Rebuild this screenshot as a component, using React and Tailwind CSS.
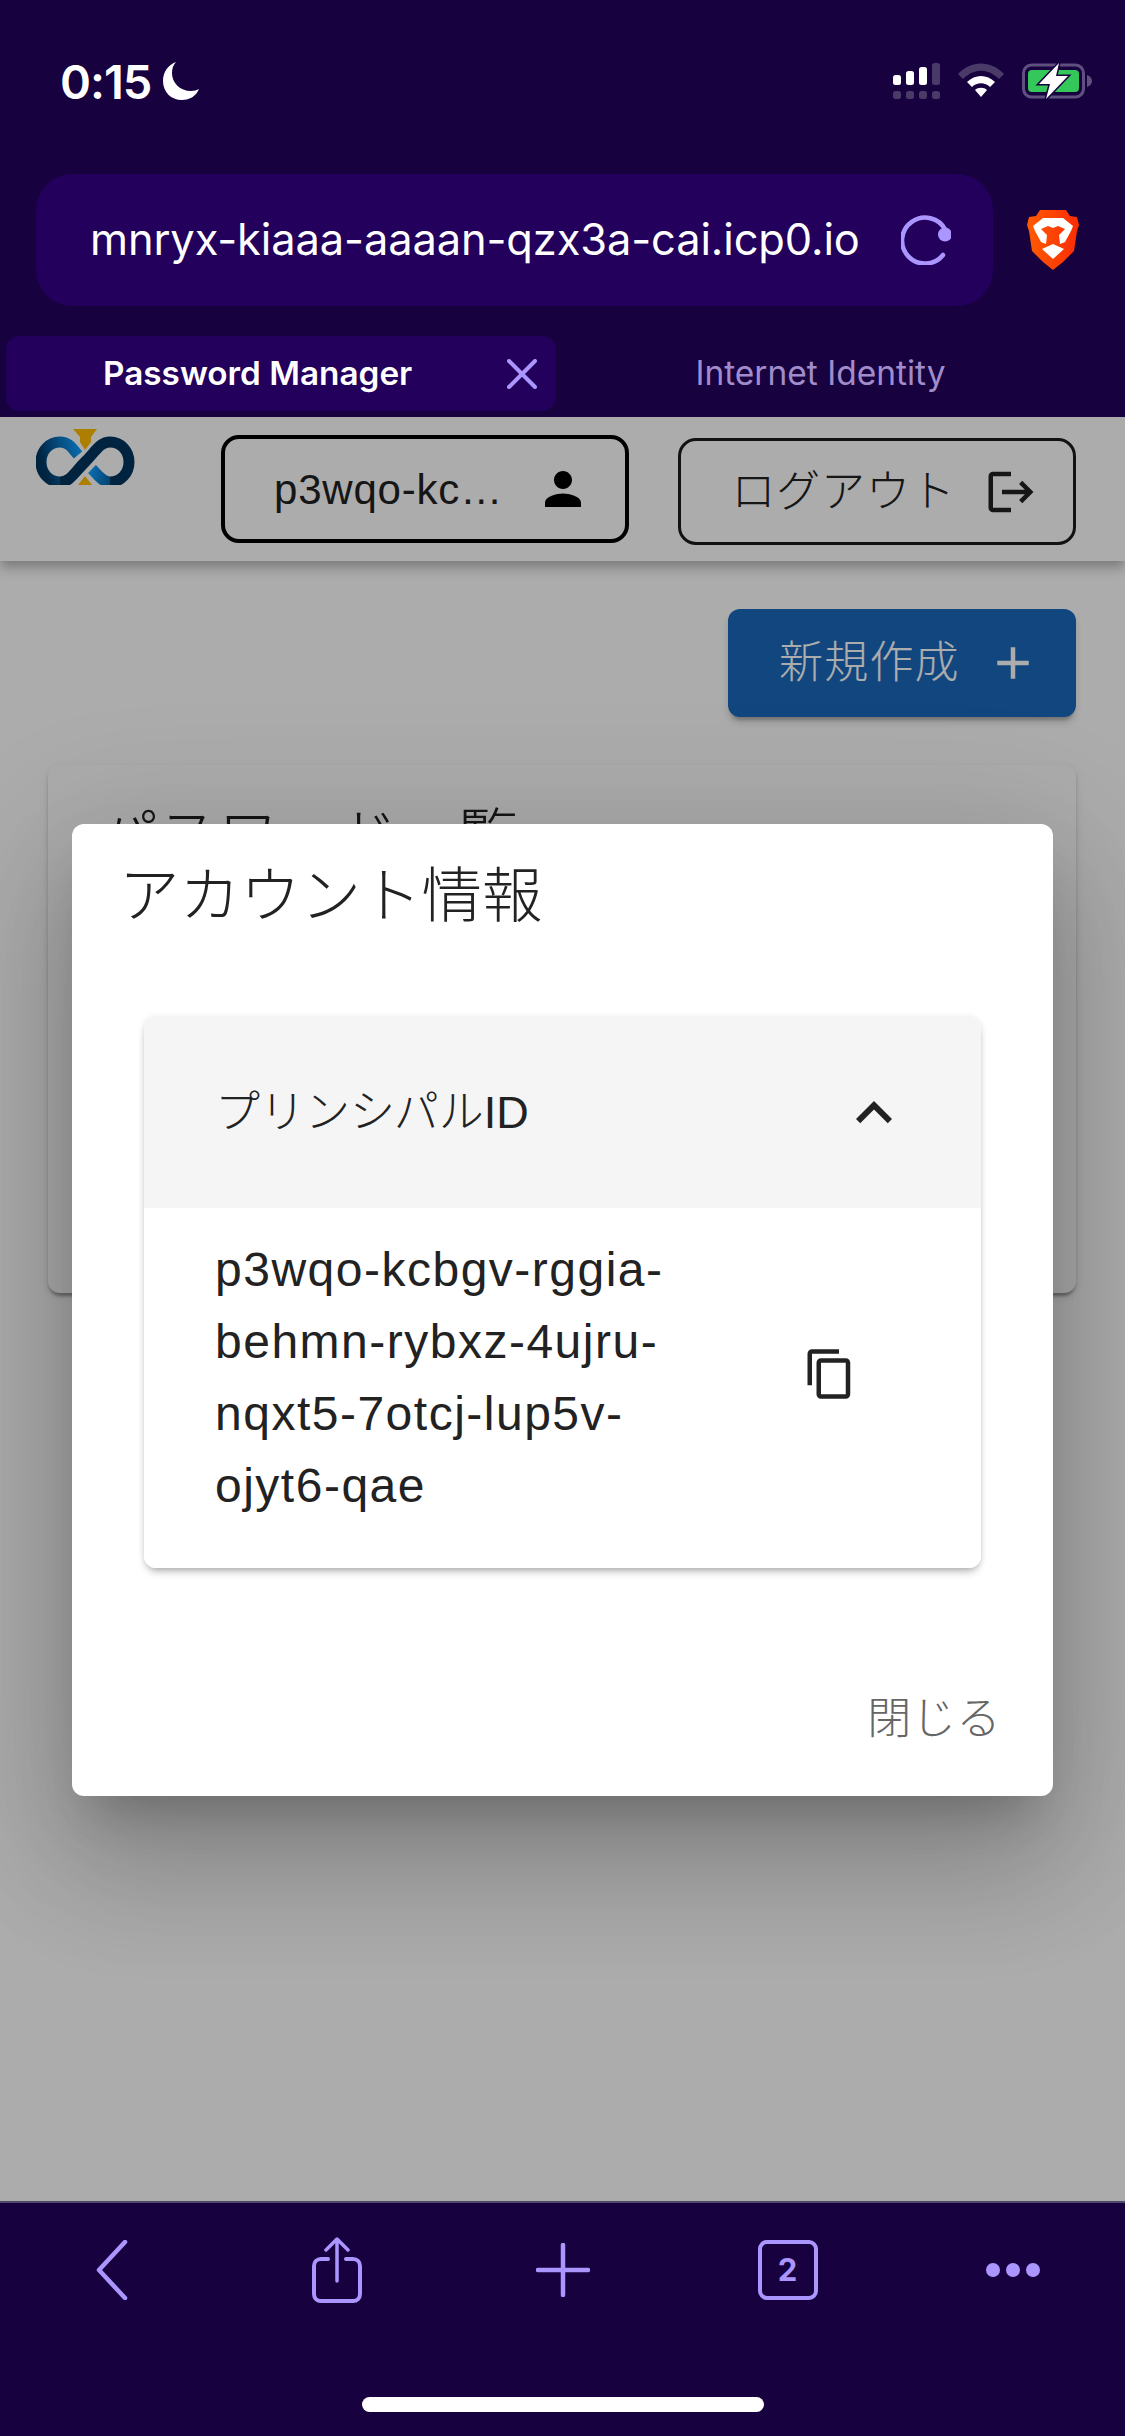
import React from "react";

const Mui = ({ d, className }) => (
  <svg viewBox="0 0 24 24" className={className} fill="currentColor">
    <path d={d} />
  </svg>
);

const StatusBar = () => (
  <div className="h-[174px] flex justify-between pl-[60px] pr-[33px] pt-[54px]">
    <div className="flex items-start text-white">
      <span className="text-[47px] leading-[56px] font-semibold tracking-[-1px]">0:15</span>
      <svg viewBox="0 0 36 38" className="w-[36px] h-[38px] ml-[12px] mt-[8px]" fill="currentColor">
        <path d="M13 0C5 3 0 10 0 19c0 11 8 19 19 19 8 0 14-4 17-11-2 1-5 2-8 2C17 29 9 21 9 11c0-4 1-8 4-11z" />
      </svg>
    </div>
    <div className="flex items-start pt-[9px] gap-[18px]">
      <svg viewBox="0 0 47 36" className="w-[47px] h-[36px]">
        <rect x="0" y="12" width="8" height="10" rx="2.5" fill="#fff" />
        <rect x="13" y="8" width="8" height="14" rx="2.5" fill="#fff" />
        <rect x="26" y="4" width="8" height="18" rx="2.5" fill="#fff" />
        <rect x="39" y="0" width="8" height="22" rx="2.5" fill="#4a3a68" />
        {[0, 13, 26, 39].map((x) => (
          <rect key={x} x={x} y="28" width="8" height="8" rx="2.5" fill="#4a3a68" />
        ))}
      </svg>
      <svg viewBox="0 0 46 34" className="w-[46px] h-[34px]">
        <path d="M0 11C13-3 33-3 46 11l-5 5C30 5 16 5 5 16z" fill="#4a3a68" />
        <path d="M9 19c8-8 20-8 28 0l-5 5c-5-5-13-5-18 0z" fill="#fff" />
        <path d="M17 27c3-3 9-3 12 0l-6 7z" fill="#fff" />
      </svg>
      <svg viewBox="0 0 70 36" className="w-[70px] h-[36px]">
        <rect x="1.5" y="2" width="60" height="32" rx="8" fill="none" stroke="#5f5080" strokeWidth="3" />
        <path d="M65 12c3 1 5 3 5 6s-2 5-5 6z" fill="#5f5080" />
        <rect x="6" y="7" width="51" height="22" rx="4" fill="#34c759" />
        <path d="M37 0L17 21h11l-4 15 22-23H34z" fill="#fff" stroke="#17013f" strokeWidth="3" paintOrder="stroke" />
      </svg>
    </div>
  </div>
);

const BraveLion = () => (
  <svg viewBox="0 0 52 60" className="w-[52px] h-[60px]">
    <defs>
      <linearGradient id="brave" x1="0" x2="1" y1="0" y2="0">
        <stop offset="0" stopColor="#ff5a00" />
        <stop offset="1" stopColor="#fb2c05" />
      </linearGradient>
    </defs>
    <path
      d="M13 0H39L43 6 50 7 52 15 50 21 47 41 36 52 26 60 16 52 5 41 2 21 0 15 2 7 9 6Z"
      fill="url(#brave)"
    />
    <path
      d="M6 16L16 8H36L46 16 44 21 38 32 33 34 32 25 38 19 31 16 26 18 21 16 14 19 20 25 19 34 14 32 8 21Z"
      fill="#fff"
    />
    <path d="M15 39L26 34 37 39 26 49Z" fill="#fff" />
  </svg>
);

const TopChrome = () => (
  <div className="h-[417px] bg-[#17013f] flex flex-col shrink-0">
    <StatusBar />
    <div className="h-[132px] flex items-center pl-[36px]">
      <div className="w-[957px] h-full bg-[#22005c] rounded-[36px] flex items-center pl-[54px] pr-[42px] justify-between">
        <span className="text-white text-[43.4px] tracking-[-0.1px]">mnryx-kiaaa-aaaan-qzx3a-cai.icp0.io</span>
        <svg viewBox="0 0 50 50" className="w-[50px] h-[50px]" fill="none">
          <path
            d="M42 40A23 23 0 1 1 44.5 15"
            stroke="#ab95ff"
            strokeWidth="4.5"
            strokeLinecap="round"
          />
          <circle cx="44" cy="19.5" r="7" fill="#ab95ff" />
        </svg>
      </div>
      <div className="ml-[34px]">
        <BraveLion />
      </div>
    </div>
    <div className="mt-[30px] h-[75px] flex pl-[6px]">
      <div className="w-[550px] h-full bg-[#22005c] rounded-[14px] flex items-center justify-between pl-[97px] pr-[19px]">
        <span className="text-white text-[33.3px] font-semibold">Password Manager</span>
        <svg viewBox="0 0 30 30" className="w-[30px] h-[30px]" fill="none">
          <path d="M2 2L28 28M28 2L2 28" stroke="#ab95ff" strokeWidth="4" strokeLinecap="round" />
        </svg>
      </div>
      <div className="flex-1 flex items-center justify-center pr-[40px]">
        <span className="text-[#a08ccb] text-[33.5px]">Internet Identity</span>
      </div>
    </div>
  </div>
);

const Logo = () => (
  <svg viewBox="0 0 99 56" className="w-[99px] h-[56px]" fill="none">
    <defs>
      <linearGradient id="logoLeft" gradientUnits="userSpaceOnUse" x1="44" y1="24" x2="6" y2="36">
        <stop offset="0" stopColor="#0f9dff" />
        <stop offset="1" stopColor="#003660" />
      </linearGradient>
      <linearGradient id="logoRight" gradientUnits="userSpaceOnUse" x1="56" y1="40" x2="92" y2="50">
        <stop offset="0" stopColor="#0f9dff" />
        <stop offset="1" stopColor="#003660" />
      </linearGradient>
    </defs>
    <path d="M37 0H61L55 8V13L49 21 44 13V8Z" fill="#ffbc00" />
    <path d="M49 47L56 56H42Z" fill="#ffbc00" />
    <path d="M42 26C36 19 33 13 24 13 13 13 5 22 5 33S13 53 24 53" stroke="url(#logoLeft)" strokeWidth="11" />
    <path d="M74 53C66 53 62 46 56 40" stroke="url(#logoRight)" strokeWidth="11" />
    <path d="M24 53C34 53 38 44 49 33S64 13 74 13C85 13 93 22 93 33S85 53 74 53" stroke="#003660" strokeWidth="11" />
  </svg>
);

const Header = () => (
  <div className="h-[144px] bg-white flex items-start pl-[36px] pr-[49px] shadow-[0_6px_12px_rgba(0,0,0,0.3)] relative">
    <div className="mt-[12px]">
      <Logo />
    </div>
    <button className="ml-[86px] mt-[18px] w-[408px] h-[108px] border-[4px] border-black rounded-[18px] flex items-center justify-between pl-[49px] pr-[35px]">
      <span className="text-[42px] tracking-[0.8px] text-[#222]">p3wqo-kc…</span>
      <Mui
        className="w-[54px] h-[54px] text-black"
        d="M12 12c2.21 0 4-1.79 4-4s-1.79-4-4-4-4 1.79-4 4 1.79 4 4 4zm0 2c-2.67 0-8 1.34-8 4v2h16v-2c0-2.66-5.33-4-8-4z"
      />
    </button>
    <button className="ml-[49px] mt-[21px] w-[399px] h-[107px] border-[3px] border-[#1c1c1c] rounded-[18px] flex items-center justify-between pl-[51px] pr-[35px]">
      <span className="text-[44px] tracking-[0.8px] text-[#222] font-light">ログアウト</span>
      <Mui
        className="w-[54px] h-[54px] text-[#222]"
        d="M17 7l-1.41 1.41L18.17 11H8v2h10.17l-2.58 2.58L17 17l5-5zM4 5h8V3H4c-1.1 0-2 .9-2 2v14c0 1.1.9 2 2 2h8v-2H4V5z"
      />
    </button>
  </div>
);

const AccountDialog = () => (
  <div className="w-[981px] h-[972px] bg-white rounded-[12px] flex flex-col shadow-[0_33px_45px_-21px_rgba(0,0,0,0.2),0_72px_114px_9px_rgba(0,0,0,0.14),0_27px_138px_24px_rgba(0,0,0,0.12)]">
    <h2 className="text-[60.5px] leading-[96px] pt-[24px] pl-[47px] font-light text-[#222]">アカウント情報</h2>
    <div className="mt-[73px] mx-[72px] rounded-[12px] overflow-hidden shadow-[0_6px_9px_-3px_rgba(0,0,0,0.3),0_0_6px_rgba(0,0,0,0.1)]">
      <div className="h-[191px] bg-[#f5f5f5] flex items-center justify-between pl-[71px] pr-[71px]">
        <span className="text-[45px] font-light text-[#222]">プリンシパルID</span>
        <Mui className="w-[72px] h-[72px] text-[#222]" d="M12 8l-6 6 1.41 1.41L12 10.83l4.59 4.58L18 14z" />
      </div>
      <div className="h-[360px] bg-white flex items-center justify-between pl-[71px] pr-[124px] pb-[20px]">
        <p className="w-[480px] text-[48px] leading-[72px] tracking-[1.5px] text-[#222]">
          p3wqo-kcbgv-rggia-behmn-rybxz-4ujru-nqxt5-7otcj-lup5v-ojyt6-qae
        </p>
        <Mui
          className="w-[54px] h-[54px] text-[#222] mb-[8px]"
          d="M16 1H4c-1.1 0-2 .9-2 2v14h2V3h12V1zm3 4H8c-1.1 0-2 .9-2 2v14c0 1.1.9 2 2 2h11c1.1 0 2-.9 2-2V7c0-1.1-.9-2-2-2zm0 16H8V7h11v14z"
        />
      </div>
    </div>
    <div className="mt-auto flex justify-end pr-[52px] pb-[48px]">
      <span className="text-[44px] leading-[58px] tracking-[0.6px] font-light text-[#666]">閉じる</span>
    </div>
  </div>
);

const Main = () => (
  <div className="relative flex-1 bg-white overflow-hidden">
    <Header />
    <div className="flex justify-end pr-[49px] mt-[48px]">
      <button className="w-[348px] h-[108px] bg-[#1b68bd] rounded-[12px] flex items-center justify-between pl-[51px] pr-[36px] text-white shadow-[0_6px_3px_-3px_rgba(0,0,0,0.2),0_6px_6px_rgba(0,0,0,0.14)]">
        <span className="text-[44px] tracking-[1.2px] font-light">新規作成</span>
        <Mui className="w-[54px] h-[54px]" d="M19 13h-6v6h-2v-6H5v-2h6V5h2v6h6v2z" />
      </button>
    </div>
    <div className="mt-[48px] ml-[48px] mr-[49px] h-[528px] bg-white rounded-[12px] pl-[50px] pt-[25px] shadow-[0_6px_3px_-3px_rgba(0,0,0,0.2),0_3px_3px_rgba(0,0,0,0.14),0_3px_9px_rgba(0,0,0,0.12)]">
      <h1 className="text-[60px] leading-[96px] font-light text-[#222]">パスワード一覧</h1>
    </div>
    {/* backdrop + dialog */}
    <div className="absolute inset-0 bg-black/[0.325] flex justify-center items-start pt-[407px]">
      <AccountDialog />
    </div>
  </div>
);

const BottomBar = () => (
  <div className="h-[235px] shrink-0 bg-[#17013f] border-t-2 border-[#50486a] flex flex-col">
    <div className="h-[134px] grid grid-cols-5 place-items-center text-[#ab95ff]">
      <svg viewBox="0 0 32 60" className="w-[32px] h-[60px] mr-[1px]" fill="none">
        <path d="M29 2L3 30 29 58" stroke="currentColor" strokeWidth="4.5" strokeLinecap="round" strokeLinejoin="round" />
      </svg>
      <svg viewBox="0 0 50 66" className="w-[50px] h-[66px] mr-[2px]" fill="none">
        <path d="M25 44V3M14 13L25 2 36 13" stroke="currentColor" strokeWidth="3.5" strokeLinecap="round" strokeLinejoin="round" />
        <path d="M16 22H9C5 22 2 25 2 29V57C2 61 5 64 9 64H41C45 64 48 61 48 57V29C48 25 45 22 41 22H34" stroke="currentColor" strokeWidth="4" strokeLinecap="round" />
      </svg>
      <svg viewBox="0 0 54 54" className="w-[54px] h-[54px]" fill="none">
        <path d="M27 2V52M2 27H52" stroke="currentColor" strokeWidth="4.5" strokeLinecap="round" />
      </svg>
      <div className="w-[60px] h-[60px] border-[4px] border-[#ab95ff] rounded-[9px] flex items-center justify-center text-[31px] font-bold">
        2
      </div>
      <svg viewBox="0 0 54 14" className="w-[54px] h-[14px]" fill="currentColor">
        <circle cx="7" cy="7" r="7" />
        <circle cx="27" cy="7" r="7" />
        <circle cx="47" cy="7" r="7" />
      </svg>
    </div>
    <div className="flex justify-center mt-[60px]">
      <div className="w-[402px] h-[15px] rounded-full bg-white" />
    </div>
  </div>
);

export default function App() {
  return (
    <div className="w-[1125px] h-[2436px] flex flex-col overflow-hidden font-['Inter','Noto_Sans_CJK_JP',sans-serif]">
      <TopChrome />
      <div className="contents font-['Liberation_Sans','Noto_Sans_CJK_JP',sans-serif]">
        <Main />
      </div>
      <BottomBar />
    </div>
  );
}
